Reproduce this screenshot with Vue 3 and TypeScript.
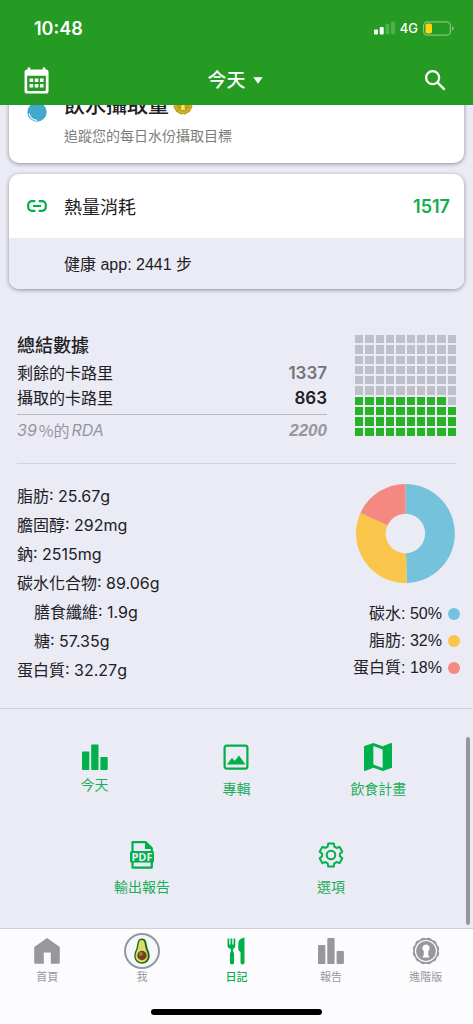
<script setup lang="ts">
interface Nutrient {
  name: string
  value: string
  nested?: boolean
}

interface Share {
  name: string
  percent: number
  tone: string
  path: string
}

const nutrients: Nutrient[] = [
  { name: '脂肪', value: '25.67g' },
  { name: '膽固醇', value: '292mg' },
  { name: '鈉', value: '2515mg' },
  { name: '碳水化合物', value: '89.06g' },
  { name: '膳食纖維', value: '1.9g', nested: true },
  { name: '糖', value: '57.35g', nested: true },
  { name: '蛋白質', value: '32.27g' },
]

const point = (cx: number, cy: number, r: number, turn: number): string => {
  const a = (turn - 0.25) * Math.PI * 2
  return `${(cx + r * Math.cos(a)).toFixed(2)} ${(cy + r * Math.sin(a)).toFixed(2)}`
}

const ring = (from: number, to: number): string => {
  const large = to - from > 0.5 ? 1 : 0
  return (
    `M${point(50, 50, 50, from)}A50 50 0 ${large} 1 ${point(50, 50, 50, to)}` +
    `L${point(50, 50, 20, to)}A20 20 0 ${large} 0 ${point(50, 50, 20, from)}Z`
  )
}

const shares: Share[] = [
  { name: '碳水', percent: 50, tone: 'carb', path: ring(0, 0.496) },
  { name: '脂肪', percent: 32, tone: 'fat', path: ring(0.496, 0.818) },
  { name: '蛋白質', percent: 18, tone: 'protein', path: ring(0.818, 1) },
]

// The grid fills from the bottom row up, 39 of its 100 cells.
const filledPercent = 39
const cells: boolean[] = Array.from({ length: 100 }, (_, i) => {
  const rowFromBottom = 9 - Math.floor(i / 10)
  return rowFromBottom * 10 + (i % 10) < filledPercent
})

const gear: string =
  Array.from({ length: 6 }, (_, i) => {
    const t = i / 6
    return [
      point(13, 13, 9, t - 0.06),
      point(13, 13, 11.8, t - 0.038),
      point(13, 13, 11.8, t + 0.038),
      point(13, 13, 9, t + 0.06),
    ].join('L')
  })
    .map((s, i) => (i === 0 ? 'M' : 'L') + s)
    .join('') + 'Z'

const seal: string =
  `M${point(14, 14, 12.6, 0)}` +
  Array.from({ length: 12 }, (_, i) => `Q${point(14, 14, 14.8, (i + 0.5) / 12)} ${point(14, 14, 12.6, (i + 1) / 12)}`).join('') +
  'Z'
</script>

<template>
  <div class="screen">
    <header class="top">
      <div class="status">
        <time class="clock">10:48</time>
        <div class="signals">
          <svg class="bars" viewBox="0 0 21 14" aria-hidden="true">
            <rect x="0" y="8.5" width="4" height="5" rx="1" />
            <rect x="5.7" y="6" width="4" height="7.5" rx="1" />
            <rect class="dim" x="11.4" y="3" width="4" height="10.5" rx="1" />
            <rect class="dim" x="17" y="0.5" width="4" height="13" rx="1" />
          </svg>
          <span>4G</span>
          <svg class="battery" viewBox="0 0 31 15" aria-hidden="true">
            <rect class="shell" x="0.6" y="0.8" width="26.8" height="13.4" rx="3.8" />
            <rect class="charge" x="2.5" y="2.5" width="6.5" height="10" rx="1.8" />
            <path class="cap" d="M29 5.2q1.8 0.8 1.8 2.3t-1.8 2.3z" />
          </svg>
        </div>
      </div>
      <div class="nav">
        <button class="icon-btn" aria-label="日曆">
          <svg class="calendar" viewBox="0 0 24 26" aria-hidden="true">
            <path fill-rule="evenodd" d="M3.5 0.5h2.5v2h12v-2h2.5v2h.6a2.5 2.5 0 0 1 2.5 2.5v18a2.5 2.5 0 0 1-2.5 2.5H3a2.5 2.5 0 0 1-2.5-2.5V5A2.5 2.5 0 0 1 3 2.5h.5zM3 8.5V22a1 1 0 0 0 1 1h16a1 1 0 0 0 1-1V8.5z" />
            <path d="M5.3 11h3.5v3.5H5.3zM10.3 11h3.5v3.5h-3.5zM15.3 11h3.5v3.5h-3.5zM5.3 16.3h3.5v3.5H5.3zM10.3 16.3h3.5v3.5h-3.5zM15.3 16.3h3.5v3.5h-3.5z" />
          </svg>
        </button>
        <button class="day">
          今天
          <svg class="caret" viewBox="0 0 10 7" aria-hidden="true"><path d="M0.3 0.3h9.4L5 6.7z" /></svg>
        </button>
        <button class="icon-btn" aria-label="搜尋">
          <svg class="search" viewBox="0 0 22 22" aria-hidden="true">
            <circle cx="8" cy="8" r="6.8" />
            <path d="M12.7 12.7 20.6 20.6" />
          </svg>
        </button>
      </div>
    </header>

    <main class="content">
      <section class="card water">
        <svg class="drop" viewBox="0 0 20 20" aria-hidden="true">
          <circle cx="10" cy="10" r="9.7" />
          <path d="M2.2 11.5a8 8 0 0 0 8 6.8" />
        </svg>
        <div>
          <h2>
            飲水攝取量
            <svg class="gold" viewBox="0 0 28 28" aria-hidden="true">
              <path class="seal" :d="seal" />
              <circle class="seal-ring" cx="14" cy="14" r="10.3" />
              <path class="keyhole" d="M14 7.5a3.7 3.7 0 0 1 2.2 6.7v3.6l1.2 2.7h-6.8l1.2-2.7v-3.6A3.7 3.7 0 0 1 14 7.5z" />
            </svg>
          </h2>
          <p>追蹤您的每日水份攝取目標</p>
        </div>
      </section>

      <section class="card burn">
        <div class="burn-head">
          <svg class="link" viewBox="0 0 20 12" aria-hidden="true">
            <path d="M8.3 1.2H5A3.8 3.8 0 0 0 1.2 5v2A3.8 3.8 0 0 0 5 10.8h3.3M11.7 1.2H15A3.8 3.8 0 0 1 18.8 5v2a3.8 3.8 0 0 1-3.8 3.8h-3.3M6 6h8" />
          </svg>
          <h2>熱量消耗</h2>
          <strong>1517</strong>
        </div>
        <p class="steps">健康 app: 2441 步</p>
      </section>

      <section class="summary">
        <div class="totals">
          <h2>總結數據</h2>
          <div class="line"><span>剩餘的卡路里</span><b class="left">1337</b></div>
          <div class="line"><span>攝取的卡路里</span><b>863</b></div>
          <div class="line rda"><span class="rda-text"><i>39</i><span>%的</span><i>RDA</i></span><b>2200</b></div>
        </div>
        <div class="cells" role="img" aria-label="39%">
          <span v-for="(on, i) in cells" :key="i" :class="{ on }"></span>
        </div>
      </section>

      <section class="nutrition">
        <ul class="nutrients">
          <li v-for="n in nutrients" :key="n.name" :class="{ nested: n.nested }">{{ n.name }}: {{ n.value }}</li>
        </ul>
        <div class="split">
          <svg class="donut" viewBox="0 0 100 100" aria-hidden="true">
            <path v-for="s in shares" :key="s.name" :class="s.tone" :d="s.path" />
          </svg>
          <ul class="legend">
            <li v-for="s in shares" :key="s.name">
              {{ s.name }}: {{ s.percent }}%
              <svg class="dot" viewBox="0 0 12 12" aria-hidden="true"><circle :class="s.tone" cx="6" cy="6" r="6" /></svg>
            </li>
          </ul>
        </div>
      </section>

      <section class="actions">
        <div class="row three">
          <button class="action today">
            <svg viewBox="0 0 28 28" aria-hidden="true">
              <rect x="1" y="8.5" width="7.3" height="18.5" rx="0.8" />
              <rect x="10.2" y="1.5" width="7.3" height="25.5" rx="0.8" />
              <rect x="19.4" y="14" width="7.3" height="13" rx="0.8" />
            </svg>
            今天
          </button>
          <button class="action">
            <svg viewBox="0 0 28 28" aria-hidden="true">
              <rect class="outline" x="2.6" y="2.6" width="22.8" height="23" rx="2" />
              <path d="M5 21.5l5-6.8 2.6 3.3 4.4-5.5 6.5 9z" />
            </svg>
            專輯
          </button>
          <button class="action">
            <svg viewBox="3 3 18 18" aria-hidden="true">
              <path d="M20.5 3l-.16.03L15 5.1 9 3 3.36 4.9c-.21.07-.36.25-.36.48V20.5c0 .28.22.5.5.5l.16-.03L9 18.9l6 2.1 5.64-1.9c.21-.07.36-.25.36-.48V3.5c0-.28-.22-.5-.5-.5zM15 19l-6-2.11V5l6 2.11V19z" />
            </svg>
            飲食計畫
          </button>
        </div>
        <div class="row two">
          <button class="action">
            <svg viewBox="0 0 28 28" aria-hidden="true">
              <path class="outline" d="M4.500 11V1.200h13.300l6 6V11M4.500 20v6.600h19.300V20" />
              <path d="M17 1v7h7z" />
              <rect x="2" y="10" width="24" height="11.5" rx="1.5" />
              <text x="14" y="19.5">PDF</text>
            </svg>
            輸出報告
          </button>
          <button class="action">
            <svg viewBox="-1 -1 28 28" aria-hidden="true">
              <path class="outline thin" :d="gear" />
              <circle class="outline thin" cx="13" cy="13" r="4.3" />
            </svg>
            選項
          </button>
        </div>
      </section>
      <div class="thumb"></div>
    </main>

    <footer class="bottom">
      <nav class="tabs">
        <a href="#home">
          <span class="tab-icon">
            <svg viewBox="0 0 28 28" aria-hidden="true">
              <path d="M14 1l12.800 9v15.500q0 1.200-1.200 1.200H17.800V15.500h-7v11.200H2.400Q1.200 26.700 1.200 25.500V10z" />
            </svg>
          </span>
          首頁
        </a>
        <a href="#me">
          <span class="tab-icon avatar">
            <svg viewBox="0 0 28 28" aria-hidden="true">
              <path fill="#24611c" d="M14 1.5c-3.7 0-4.5 3.5-5 7.3-.5 3.8-2.7 6.2-2.7 10C6.3 23.5 9.5 26.7 14 26.7s7.7-3.2 7.7-7.9c0-3.8-2.2-6.2-2.7-10-.5-3.8-1.3-7.3-5-7.3z" />
              <path fill="#d5e164" d="M13.7 3c-2.6 0-3 3-3.4 6-.5 4-2.7 6.3-2.7 9.8 0 4 2.5 6.5 6.1 6.5s6.1-2.5 6.1-6.5c0-3.5-2.2-5.8-2.7-9.8-.4-3-.8-6-3.4-6z" />
              <circle cx="14" cy="18.5" r="4.7" fill="#744020" />
              <circle cx="12.8" cy="17" r="2" fill="#aa7350" />
            </svg>
          </span>
          我
        </a>
        <a href="#diary" class="active" aria-current="page">
          <span class="tab-icon">
            <svg viewBox="0 0 28 28" aria-hidden="true">
              <path d="M5.5 1.5h1.7v6h1.3v-6h1.8v6h1.3v-6h1.7v7.5q0 2-2.2 2.9V15q1 .5 1 2v8.5a2.1 2.1 0 0 1-4.2 0V17q0-1.5 1-2v-3.1Q5.5 11 5.5 9z" />
              <path d="M22.5 .5v25a2 2 0 0 1-4 0V15q-2.200-.8-2.200-3V6.500q0-5 6.200-6z" />
            </svg>
          </span>
          日記
        </a>
        <a href="#report">
          <span class="tab-icon">
            <svg viewBox="0 0 28 28" aria-hidden="true">
              <rect x="1" y="8" width="7.3" height="19" rx="0.8" />
              <rect x="10.3" y="1" width="7.3" height="26" rx="0.8" />
              <rect x="19.6" y="14" width="7.3" height="13" rx="0.8" />
            </svg>
          </span>
          報告
        </a>
        <a href="#premium">
          <span class="tab-icon">
            <svg viewBox="0 0 28 28" aria-hidden="true">
              <path :d="seal" />
              <circle class="seal-ring" cx="14" cy="14" r="10.5" />
              <path class="keyhole" d="M14 7.5a3.7 3.7 0 0 1 2.2 6.7v3.6l1.2 2.7h-6.8l1.2-2.7v-3.6A3.7 3.7 0 0 1 14 7.5z" />
            </svg>
          </span>
          進階版
        </a>
      </nav>
      <div class="home-bar"></div>
    </footer>
  </div>
</template>

<style>
body {
  margin: 0;
}
</style>

<style scoped>
.screen {
  display: flex;
  flex-direction: column;
  min-height: 100vh;
  background: #ebebf5;
  color: #202024;
  font-family: Inter, "Noto Sans CJK TC", sans-serif;
  font-size: 16px;
}

h2,
p,
ul {
  margin: 0;
  padding: 0;
  list-style: none;
}

svg {
  display: block;
  flex: none;
}

button {
  border: 0;
  padding: 0;
  background: none;
  color: inherit;
  font: inherit;
  cursor: pointer;
}

.top {
  background: #259b24;
  color: #fff;
}

.status {
  display: flex;
  justify-content: space-between;
  align-items: center;
  height: 56px;
  padding: 0 19px 0 34px;
}

.clock {
  font-size: 18px;
  font-weight: 600;
}

.signals {
  display: flex;
  align-items: center;
  gap: 5px;
  font-size: 13px;
  font-weight: 500;
}

.bars {
  width: 21px;
  height: 14px;
  fill: #fff;
}

.dim {
  opacity: 0.2;
}

.battery {
  width: 31px;
  height: 15px;
}

.shell {
  fill: none;
  stroke: #84c484;
  stroke-width: 1.2;
}

.charge {
  fill: #ffd60a;
}

.cap {
  fill: #84c484;
}

.nav {
  display: grid;
  grid-template-columns: 1fr auto 1fr;
  align-items: center;
  height: 49px;
  padding: 0 27px 0 24px;
}

.icon-btn:last-child {
  justify-self: end;
}

.calendar {
  width: 25px;
  height: 27px;
  fill: #fff;
}

.search {
  width: 21px;
  height: 21px;
  fill: none;
  stroke: #fff;
  stroke-width: 2.4;
}

.day {
  display: flex;
  align-items: center;
  gap: 7px;
  font-size: 19px;
  font-weight: 500;
  line-height: 28px;
}

.caret {
  width: 10px;
  height: 7px;
  fill: #fff;
}

.content {
  position: relative;
  flex: 1;
  overflow: hidden;
}

.card {
  margin: 0 9px;
  border-radius: 10px;
  background: #fff;
  box-shadow: 0 1px 4px rgba(0, 0, 0, 0.4);
}

.water {
  display: flex;
  gap: 17px;
  margin-top: -28px;
  padding: 14px 16px 17px 18px;
}

.drop {
  width: 20px;
  height: 20px;
  margin-top: 11px;
  fill: #42a8cc;
}

.drop path {
  fill: none;
  stroke: #fff;
  stroke-width: 1.2;
}

.water h2 {
  display: flex;
  align-items: center;
  gap: 4px;
  font-size: 21px;
  font-weight: 500;
  line-height: 28px;
}

.gold {
  width: 20px;
  height: 20px;
}

.gold .seal {
  fill: #c0a014;
}

.gold .keyhole {
  fill: #f6e878;
}

.gold .seal-ring {
  stroke: #dcc650;
}

.seal-ring {
  fill: none;
  stroke: #fff;
  stroke-width: 1.2;
}

.keyhole {
  fill: #fff;
}

.water p {
  margin-top: 7px;
  color: #7c7c7c;
  font-size: 14px;
  line-height: 20px;
}

.burn {
  margin-top: 11px;
  overflow: hidden;
}

.burn-head {
  display: flex;
  align-items: center;
  gap: 17px;
  height: 64px;
  padding: 0 14px 0 18px;
}

.link {
  width: 20px;
  height: 12px;
  fill: none;
  stroke: #00b04a;
  stroke-width: 2.2;
}

.burn h2 {
  flex: 1;
  font-size: 18px;
  font-weight: 400;
}

.burn strong {
  color: #12ae4c;
  font-size: 18px;
  font-weight: 600;
}

.steps {
  padding: 3px 0 0 55px;
  background: #ebebf5;
  font-family: "Liberation Sans", "Noto Sans CJK TC", sans-serif;
  line-height: 48px;
}

.summary {
  display: flex;
  gap: 28px;
  margin: 0 17px;
  padding: 41px 0 20px;
  border-bottom: 1px solid #d3d3dd;
}

.totals {
  flex: 1;
}

.totals h2 {
  font-size: 18px;
  font-weight: 500;
  line-height: 31px;
}

.line {
  display: flex;
  justify-content: space-between;
  line-height: 25px;
}

.line b {
  font-size: 17px;
  font-weight: 600;
}

.line .left {
  color: #737378;
}

.rda {
  margin-top: 3px;
  padding-top: 3px;
  border-top: 1px solid #b9b9c2;
  color: #96969c;
}

.rda b {
  font-family: "Liberation Sans", sans-serif;
  font-style: italic;
}

.rda-text {
  display: flex;
  gap: 2px;
}

.rda-text span {
  font-family: "Noto Sans CJK TC", sans-serif;
}

.cells {
  display: grid;
  grid-template-columns: repeat(10, 1fr);
  gap: 2px;
  width: 101px;
  height: 101px;
  margin-top: 5px;
}

.cells span {
  background: #c0c0ca;
}

.cells .on {
  background: #26b426;
}

.nutrition {
  display: flex;
  justify-content: space-between;
  padding: 18px 13px 23px 17px;
  border-bottom: 1px solid #d3d3dd;
}

.nutrients {
  line-height: 29px;
}

.nested {
  padding-left: 17px;
}

.split {
  display: flex;
  flex-direction: column;
  align-items: flex-end;
  padding-top: 2px;
}

.donut {
  width: 99px;
  height: 99px;
  margin: 0 5px 17px 0;
}

.legend {
  font-family: "Liberation Sans", "Noto Sans CJK TC", sans-serif;
  line-height: 27px;
}

.legend li {
  display: flex;
  justify-content: flex-end;
  align-items: center;
  gap: 6px;
}

.dot {
  width: 12px;
  height: 12px;
}

.carb {
  fill: #74c2db;
}

.fat {
  fill: #f9c54b;
}

.protein {
  fill: #f58880;
}

.actions {
  padding: 34px 0 31px;
}

.row {
  display: grid;
}

.three {
  grid-template-columns: repeat(3, 30%);
  justify-content: center;
}

.two {
  grid-template-columns: repeat(2, 40%);
  justify-content: center;
  margin-top: 42px;
}

.action {
  display: flex;
  flex-direction: column;
  align-items: center;
  gap: 8px;
  color: #1cae58;
  font-size: 14px;
  line-height: 20px;
}

.today {
  gap: 4px;
}

.action svg {
  width: 28px;
  height: 28px;
  fill: #00b04a;
}

.action .outline {
  fill: none;
  stroke: #00b04a;
  stroke-width: 2.2;
  stroke-linejoin: round;
}

.action .thin {
  stroke-width: 2;
}

.action text {
  fill: #ebebf5;
  font-family: "Open Sans", sans-serif;
  font-size: 11px;
  font-weight: 700;
  text-anchor: middle;
}

.thumb {
  position: absolute;
  right: 3px;
  bottom: 3px;
  width: 4px;
  height: 188px;
  border-radius: 2px;
  background: #96969b;
}

.bottom {
  border-top: 1px solid #cfcfd4;
  background: #fcfcfe;
}

.tabs {
  display: grid;
  grid-template-columns: repeat(5, 1fr);
  padding-top: 4px;
}

.tabs a {
  display: flex;
  flex-direction: column;
  align-items: center;
  color: #98989c;
  fill: #98989c;
  font-size: 11px;
  line-height: 16px;
  text-decoration: none;
}

.tabs .active {
  color: #00b04a;
  fill: #00b04a;
  font-weight: 500;
}

.tab-icon {
  display: flex;
  align-items: center;
  justify-content: center;
  box-sizing: border-box;
  width: 36px;
  height: 36px;
}

.tab-icon svg {
  width: 28px;
  height: 28px;
}

.avatar {
  border: 2px solid #96969f;
  border-radius: 50%;
  background: #f4f8fa;
}

.home-bar {
  width: 36%;
  height: 6px;
  margin: 24px auto 9px;
  border-radius: 3px;
  background: #000;
}
</style>
